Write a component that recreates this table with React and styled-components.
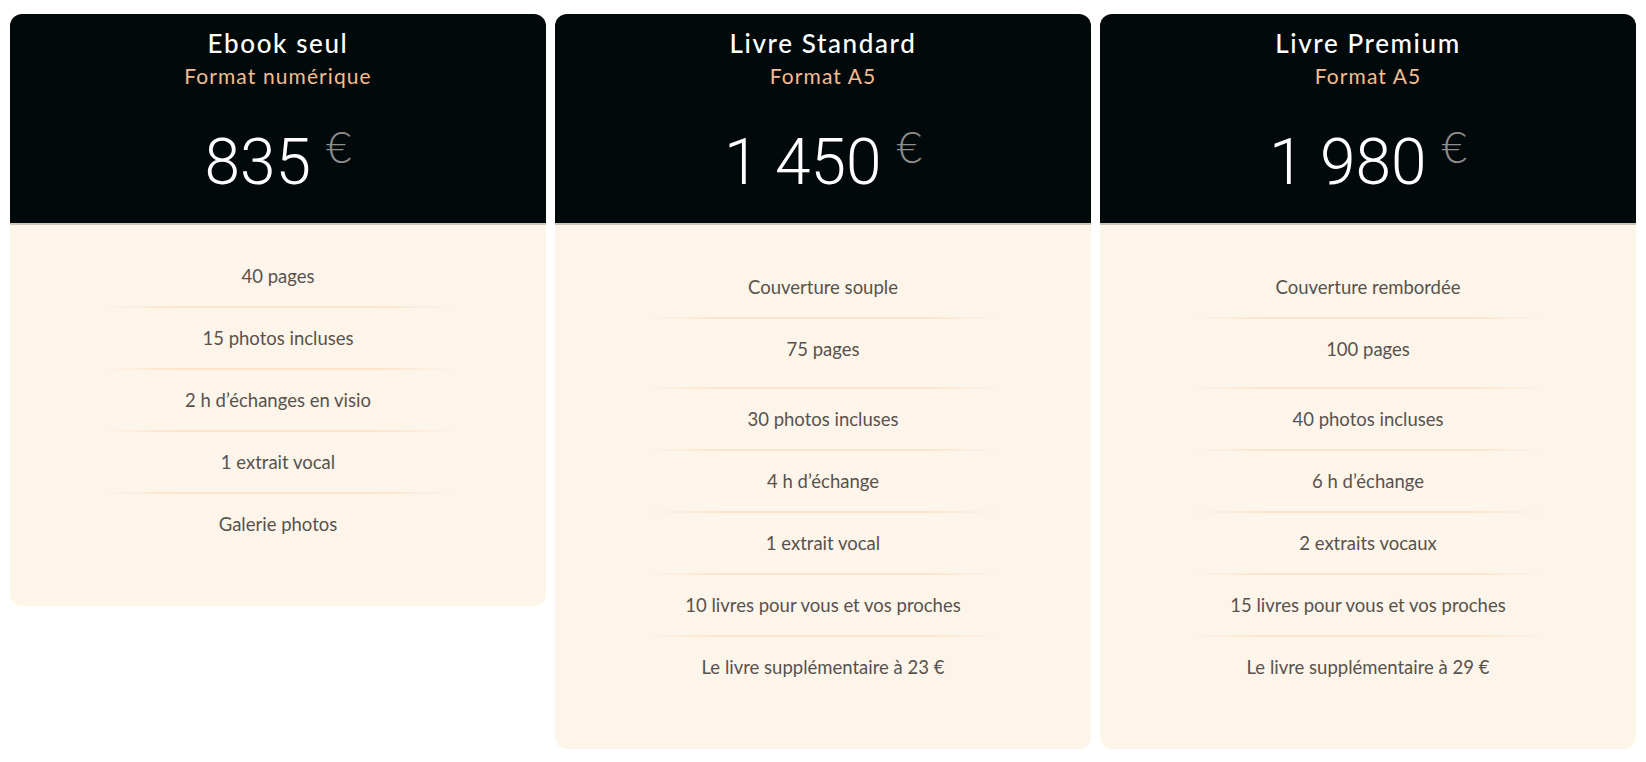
import styled, { createGlobalStyle } from 'styled-components';

const plans = [
  {
    title: 'Ebook seul',
    format: 'Format numérique',
    price: '835',
    padTop: 21,
    features: [
      { label: '40 pages' },
      { label: '15 photos incluses' },
      { label: '2 h d’échanges en visio' },
      { label: '1 extrait vocal' },
      { label: 'Galerie photos' },
    ],
  },
  {
    title: 'Livre Standard',
    format: 'Format A5',
    price: '1 450',
    padTop: 32,
    features: [
      { label: 'Couverture souple' },
      { label: '75 pages', extra: 8 },
      { label: '30 photos incluses' },
      { label: '4 h d’échange' },
      { label: '1 extrait vocal' },
      { label: '10 livres pour vous et vos proches' },
      { label: 'Le livre supplémentaire à 23 €' },
    ],
  },
  {
    title: 'Livre Premium',
    format: 'Format A5',
    price: '1 980',
    padTop: 32,
    features: [
      { label: 'Couverture rembordée' },
      { label: '100 pages', extra: 8 },
      { label: '40 photos incluses' },
      { label: '6 h d’échange' },
      { label: '2 extraits vocaux' },
      { label: '15 livres pour vous et vos proches' },
      { label: 'Le livre supplémentaire à 29 €' },
    ],
  },
];

export default function App() {
  return (
    <>
      <GlobalStyle />
      <Pricing>
        {plans.map((plan) => (
          <Card key={plan.title}>
            <Header>
              <Title>{plan.title}</Title>
              <Format>{plan.format}</Format>
              <Price>
                {plan.price}
                <Currency>€</Currency>
              </Price>
            </Header>

            <Features $padTop={plan.padTop}>
              {plan.features.map((f, i) => (
                <li key={f.label}>
                  {i > 0 && <Divider />}
                  <Feature $extra={f.extra || 0}>{f.label}</Feature>
                </li>
              ))}
            </Features>
          </Card>
        ))}
      </Pricing>
    </>
  );
}

const GlobalStyle = createGlobalStyle`
  * {
    box-sizing: border-box;
  }

  body {
    margin: 0;
    background: #ffffff;
    font-family: Lato, 'Open Sans', sans-serif;
  }
`;

const Pricing = styled.main`
  display: flex;
  align-items: flex-start;
  gap: 9px;
  padding: 14px 11px 0 10px;
`;

const Card = styled.section`
  flex: 0 0 536px;
  border-radius: 12px;
  overflow: hidden;
  background-color: #fef5ea;
`;

const Header = styled.header`
  display: flex;
  flex-direction: column;
  align-items: center;
  height: 211px;
  padding-top: 14px;
  background-color: #02090b;
  border-bottom: 2px solid #cdc6bd;
`;

const Title = styled.h2`
  margin: 0;
  font-family: Lato, sans-serif;
  font-size: 26px;
  font-weight: 500;
  line-height: 30px;
  letter-spacing: 1.6px;
  color: #ffffff;
`;

const Format = styled.p`
  margin: 3px 0 0;
  font-family: Lato, sans-serif;
  font-size: 21px;
  font-weight: 400;
  line-height: 30px;
  letter-spacing: 1.1px;
  color: #f3bd90;
`;

const Price = styled.div`
  display: flex;
  align-items: flex-start;
  margin-top: 37px;
  font-family: Roboto, sans-serif;
  font-size: 64px;
  font-weight: 300;
  line-height: 70px;
  color: #ffffff;
`;

const Currency = styled.span`
  margin: -3px 0 0 15px;
  font-family: Lato, sans-serif;
  font-size: 44px;
  font-weight: 300;
  line-height: 42px;
  color: #8d8d8d;
`;

const Features = styled.ul`
  list-style: none;
  margin: 0;
  padding: ${(p) => p.$padTop}px 0 52px;
`;

const Feature = styled.div`
  display: flex;
  align-items: center;
  justify-content: center;
  height: ${(p) => 60 + p.$extra}px;
  padding-bottom: ${(p) => p.$extra}px;
  font-family: Lato, sans-serif;
  font-size: 18.5px;
  color: #57524e;
`;

const Divider = styled.div`
  width: 360px;
  height: 2px;
  margin: 0 auto;
  background: linear-gradient(
    90deg,
    rgba(251, 229, 205, 0) 0%,
    #fbe4cb 22%,
    #fbe4cb 78%,
    rgba(251, 229, 205, 0) 100%
  );
`;
